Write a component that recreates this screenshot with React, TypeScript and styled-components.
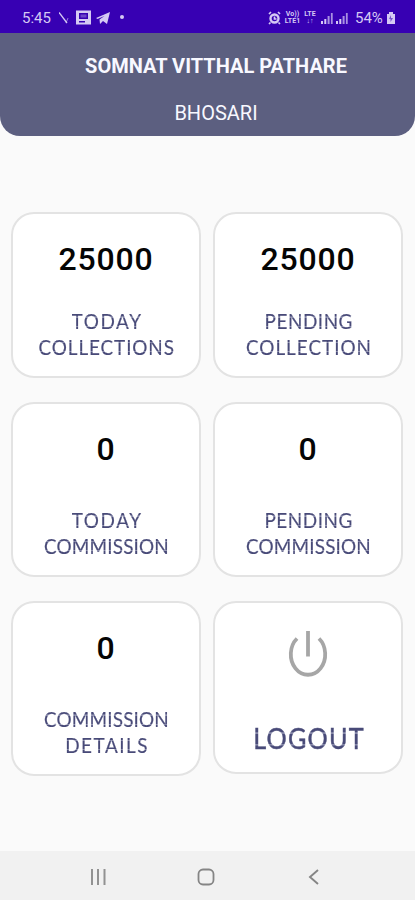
import React from "react";
import styled, { createGlobalStyle } from "styled-components";

const GlobalStyle = createGlobalStyle`
  * { box-sizing: border-box; }
  body { margin: 0; background: #fafafa; font-family: Roboto, sans-serif; }
`;

const Screen = styled.div`
  width: 415px;
  height: 900px;
  display: flex;
  flex-direction: column;
  background: #fafafa;
  overflow: hidden;
`;

const StatusBar = styled.div`
  height: 33px;
  flex: none;
  display: flex;
  align-items: center;
  justify-content: space-between;
  padding: 2px 19px 0 22px;
  background: #3700b3;
  color: #d5c9f4;
`;

const StatusGroup = styled.div`
  display: flex;
  align-items: center;
`;

const StatusText = styled.span<{ $width: number }>`
  width: ${(p) => p.$width}px;
  font-size: 15px;
  line-height: 18px;
  white-space: nowrap;
`;

const Network = styled.span<{ $width: number }>`
  width: ${(p) => p.$width}px;
  margin-right: 4px;
  display: flex;
  flex-direction: column;
  align-items: center;
  font-size: 7px;
  font-weight: 700;
  line-height: 7px;
  white-space: nowrap;
`;

const Header = styled.header`
  height: 103px;
  flex: none;
  display: flex;
  flex-direction: column;
  align-items: center;
  padding: 21px 0 0 17px;
  background: #5c5f80;
  border-radius: 0 0 20px 20px;
  color: #f8f8ff;
`;

const AgentName = styled.h1`
  margin: 0;
  font-size: 20px;
  font-weight: 700;
  line-height: 24px;
  white-space: nowrap;
`;

const Branch = styled.div`
  margin-top: 23px;
  font-size: 20px;
  line-height: 24px;
`;

const Cards = styled.main`
  flex: 1;
  display: grid;
  grid-template-columns: 190px 190px;
  grid-template-rows: 166px 175px 175px;
  column-gap: 12px;
  row-gap: 24px;
  padding: 76px 0 0 11px;
`;

const Card = styled.section<{ $height?: number }>`
  height: ${(p) => (p.$height ? p.$height + "px" : "100%")};
  display: flex;
  flex-direction: column;
  align-items: center;
  padding-top: 26px;
  background: #fff;
  border: 2px solid #e3e3e3;
  border-radius: 23px;
`;

const Amount = styled.div`
  font-size: 32px;
  font-weight: 500;
  line-height: 38px;
  letter-spacing: 0.8px;
  color: #050505;
`;

const Label = styled.div<{ $gap: number }>`
  margin-top: ${(p) => p.$gap}px;
  display: flex;
  flex-direction: column;
  align-items: center;
  font-family: Lato, sans-serif;
  transform: scaleX(0.9);
`;

/* Two faint bands across the capitals give the lettering its stencil cuts. */
const LabelLine = styled.span<{ $spacing: number; $large?: boolean }>`
  font-size: ${(p) => (p.$large ? 28 : 21)}px;
  line-height: ${(p) => (p.$large ? 32 : 25.5)}px;
  letter-spacing: ${(p) => p.$spacing}px;
  margin-right: -${(p) => p.$spacing}px;
  font-weight: 400;
  -webkit-text-stroke: ${(p) => (p.$large ? 0.5 : 0.2)}px transparent;
  white-space: nowrap;
  color: transparent;
  background: linear-gradient(
    #484a78 32%, #8587a8 33%, #8587a8 37%, #484a78 38%,
    #484a78 68%, #8587a8 69%, #8587a8 73%, #484a78 74%
  );
  background-clip: text;
  -webkit-background-clip: text;
`;

const NavBar = styled.nav`
  height: 49px;
  flex: none;
  background: #f1f1f1;
  display: flex;
  align-items: center;
  padding: 3px 0 0 88px;
  gap: 88px;
`;

const lineSpacing: Record<string, number> = {
  TODAY: 1.8,
  COLLECTIONS: 1,
  COLLECTION: 1.1,
  PENDING: 0.6,
  COMMISSION: 0.2,
  DETAILS: 1.7,
};

const stats = [
  { value: "25000", lines: ["TODAY", "COLLECTIONS"], gap: 30 },
  { value: "25000", lines: ["PENDING", "COLLECTION"], gap: 30 },
  { value: "0", lines: ["TODAY", "COMMISSION"], gap: 39 },
  { value: "0", lines: ["PENDING", "COMMISSION"], gap: 39 },
  { value: "0", lines: ["COMMISSION", "DETAILS"], gap: 39 },
];

const Bars = () => (
  <svg width="15" height="14" viewBox="0 0 15 14" fill="currentColor">
    <path d="M1 10h2v3H1zM4.300 8h2v5h-2z" />
    <path d="M7.600 5h2v8h-2zM10.900 2h1.800v11h-1.800z" opacity=".72" />
  </svg>
);

export default function App() {
  return (
    <>
      <GlobalStyle />
      <Screen>
        <StatusBar>
          <StatusGroup>
            <StatusText $width={37}>5:45</StatusText>
            <svg width="66" height="18" viewBox="0 0 66 18" fill="currentColor">
              <path d="M0 3.500 8 14" stroke="currentColor" strokeWidth="1.300" />
              <path d="M7 14 9 9" stroke="currentColor" strokeWidth="1" opacity=".6" />
              <path fillRule="evenodd" d="M17 1.500h15v14H17zM20 4v6h9V4zM20 12v1.500h6V12z" />
              <path d="M21.500 5.500h6v3h-6z" opacity=".35" />
              <path d="m37 9 14-6-3 12-4-3-3 3-.5-4.500 5-3.500-7 3z" />
              <circle cx="63" cy="8" r="2" />
            </svg>
          </StatusGroup>
          <StatusGroup>
            <svg width="17" height="14" viewBox="0 0 17 14" fill="none" stroke="currentColor">
              <circle cx="6.500" cy="7.500" r="4" strokeWidth="2.400" />
              <path d="M6.500 5.500v2.500h2M1 3l2-2M12 3l-2-2M2.500 11.500l-1.500 1.500M10.500 11.500l1.500 1.500" strokeWidth="1.700" />
            </svg>
            <Network $width={15}><span>Vo))</span><span>LTE1</span></Network>
            <Network $width={12}><span>LTE</span><span>↓↑</span></Network>
            <Bars />
            <Bars />
            <svg width="5" height="14" />
            <StatusText $width={31}>54%</StatusText>
            <svg width="10" height="14" viewBox="0 0 10 14">
              <path fill="currentColor" d="M3 1h4v2h2v10H1V3h2z" />
              <path fill="#3700b3" d="M5 4 3 8h1.500v3L7 7H5z" opacity=".6" />
            </svg>
          </StatusGroup>
        </StatusBar>
        <Header>
          <AgentName>SOMNAT VITTHAL PATHARE</AgentName>
          <Branch>BHOSARI</Branch>
        </Header>
        <Cards>
          {stats.map((s, i) => (
            <Card key={i}>
              <Amount>{s.value}</Amount>
              <Label $gap={s.gap}>
                {s.lines.map((line) => (
                  <LabelLine key={line} $spacing={lineSpacing[line]}>{line}</LabelLine>
                ))}
              </Label>
            </Card>
          ))}
          <Card $height={173}>
            <svg width="40" height="50" viewBox="0 0 40 50" fill="none" stroke="#a6a6a6" strokeWidth="3.800">
              <path d="M20 2v25.500" />
              <path d="M9 9.500A17.200 20.500 0 1 0 31 9.500" />
            </svg>
            <Label $gap={43}>
              <LabelLine $spacing={1.4} $large>LOGOUT</LabelLine>
            </Label>
          </Card>
        </Cards>
        <NavBar>
          <svg width="20" height="18" viewBox="0 0 20 18" stroke="#929292" strokeWidth="2">
            <path d="M4 1v16M10 1v16M16.500 1v16" />
          </svg>
          <svg width="20" height="18" viewBox="0 0 20 18" fill="none" stroke="#858585" strokeWidth="1.800">
            <rect x="2.500" y="1.500" width="15" height="15" rx="4.500" />
          </svg>
          <svg width="20" height="18" viewBox="0 0 20 18" fill="none" stroke="#858585" strokeWidth="1.900">
            <path d="m14 2-8 7 8 7" />
          </svg>
        </NavBar>
      </Screen>
    </>
  );
}
